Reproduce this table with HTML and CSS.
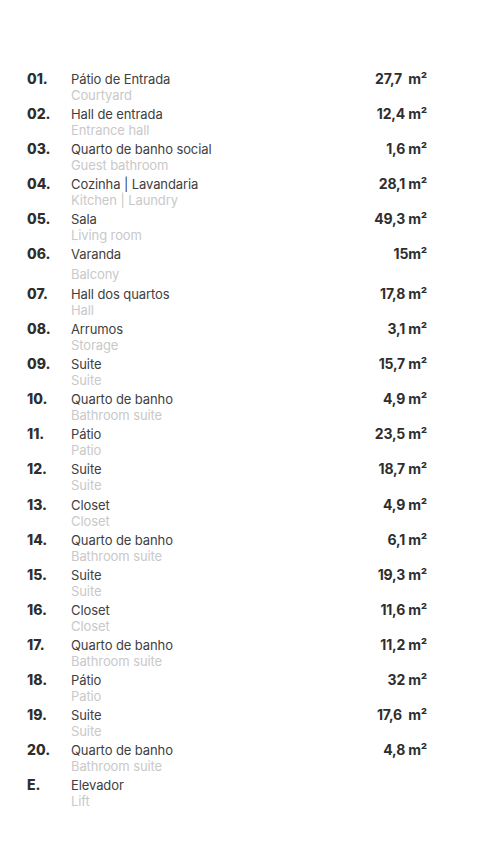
FILE: index.html
```html
<!DOCTYPE html>
<html lang="pt">
<head>
<meta charset="utf-8">
<title>Áreas</title>
<link rel="stylesheet" href="styles.css">
</head>
<body>
<main class="list">
  <div class="row"><span class="num">01.</span><div class="names"><div class="pt">Pátio de Entrada</div><div class="en">Courtyard</div></div><span class="area">27,7&nbsp; m²</span></div>
  <div class="row"><span class="num">02.</span><div class="names"><div class="pt">Hall de entrada</div><div class="en">Entrance hall</div></div><span class="area">12,4 m²</span></div>
  <div class="row"><span class="num">03.</span><div class="names"><div class="pt">Quarto de banho social</div><div class="en">Guest bathroom</div></div><span class="area">1,6 m²</span></div>
  <div class="row"><span class="num">04.</span><div class="names"><div class="pt">Cozinha | Lavandaria</div><div class="en">Kitchen | Laundry</div></div><span class="area">28,1 m²</span></div>
  <div class="row"><span class="num">05.</span><div class="names"><div class="pt">Sala</div><div class="en">Living room</div></div><span class="area">49,3 m²</span></div>
  <div class="row tall"><span class="num">06.</span><div class="names"><div class="pt">Varanda</div><div class="en">Balcony</div></div><span class="area">15m²</span></div>
  <div class="row"><span class="num">07.</span><div class="names"><div class="pt">Hall dos quartos</div><div class="en">Hall</div></div><span class="area">17,8 m²</span></div>
  <div class="row"><span class="num">08.</span><div class="names"><div class="pt">Arrumos</div><div class="en">Storage</div></div><span class="area">3,1 m²</span></div>
  <div class="row"><span class="num">09.</span><div class="names"><div class="pt">Suite</div><div class="en">Suite</div></div><span class="area">15,7 m²</span></div>
  <div class="row"><span class="num">10.</span><div class="names"><div class="pt">Quarto de banho</div><div class="en">Bathroom suite</div></div><span class="area">4,9 m²</span></div>
  <div class="row"><span class="num">11.</span><div class="names"><div class="pt">Pátio</div><div class="en">Patio</div></div><span class="area">23,5 m²</span></div>
  <div class="row"><span class="num">12.</span><div class="names"><div class="pt">Suite</div><div class="en">Suite</div></div><span class="area">18,7 m²</span></div>
  <div class="row"><span class="num">13.</span><div class="names"><div class="pt">Closet</div><div class="en">Closet</div></div><span class="area">4,9 m²</span></div>
  <div class="row"><span class="num">14.</span><div class="names"><div class="pt">Quarto de banho</div><div class="en">Bathroom suite</div></div><span class="area">6,1 m²</span></div>
  <div class="row"><span class="num">15.</span><div class="names"><div class="pt">Suite</div><div class="en">Suite</div></div><span class="area">19,3 m²</span></div>
  <div class="row"><span class="num">16.</span><div class="names"><div class="pt">Closet</div><div class="en">Closet</div></div><span class="area">11,6 m²</span></div>
  <div class="row"><span class="num">17.</span><div class="names"><div class="pt">Quarto de banho</div><div class="en">Bathroom suite</div></div><span class="area">11,2 m²</span></div>
  <div class="row"><span class="num">18.</span><div class="names"><div class="pt">Pátio</div><div class="en">Patio</div></div><span class="area">32 m²</span></div>
  <div class="row"><span class="num">19.</span><div class="names"><div class="pt">Suite</div><div class="en">Suite</div></div><span class="area">17,6&nbsp; m²</span></div>
  <div class="row"><span class="num">20.</span><div class="names"><div class="pt">Quarto de banho</div><div class="en">Bathroom suite</div></div><span class="area">4,8 m²</span></div>
  <div class="row"><span class="num">E.</span><div class="names"><div class="pt">Elevador</div><div class="en">Lift</div></div><span class="area"></span></div>
</main>
</body>
</html>
```

FILE: styles.css
```css
html, body {
  margin: 0;
  padding: 0;
  background: #ffffff;
}
body {
  font-family: Inter, "Liberation Sans", sans-serif;
  color: #3a3a3a;
}
.list {
  padding: 71px 53px 0 27px;
  display: flex;
  flex-direction: column;
}
.row {
  display: grid;
  grid-template-columns: 44px 1fr auto;
  align-items: start;
  height: 35.05px;
}
.row.tall {
  height: 40px;
}
.num {
  font-weight: 800;
  font-size: 14px;
  line-height: 16px;
  color: #2e2e2e;
}
.pt {
  font-size: 13px;
  line-height: 16px;
  letter-spacing: -0.1px;
  color: #404040;
}
.en {
  font-size: 13px;
  line-height: 16px;
  letter-spacing: -0.1px;
  color: #c9c9c9;
}
.tall .en {
  margin-top: 4px;
}
.area {
  font-weight: 700;
  font-size: 14px;
  line-height: 16px;
  color: #2e2e2e;
  text-align: right;
  letter-spacing: -0.2px;
}
```
